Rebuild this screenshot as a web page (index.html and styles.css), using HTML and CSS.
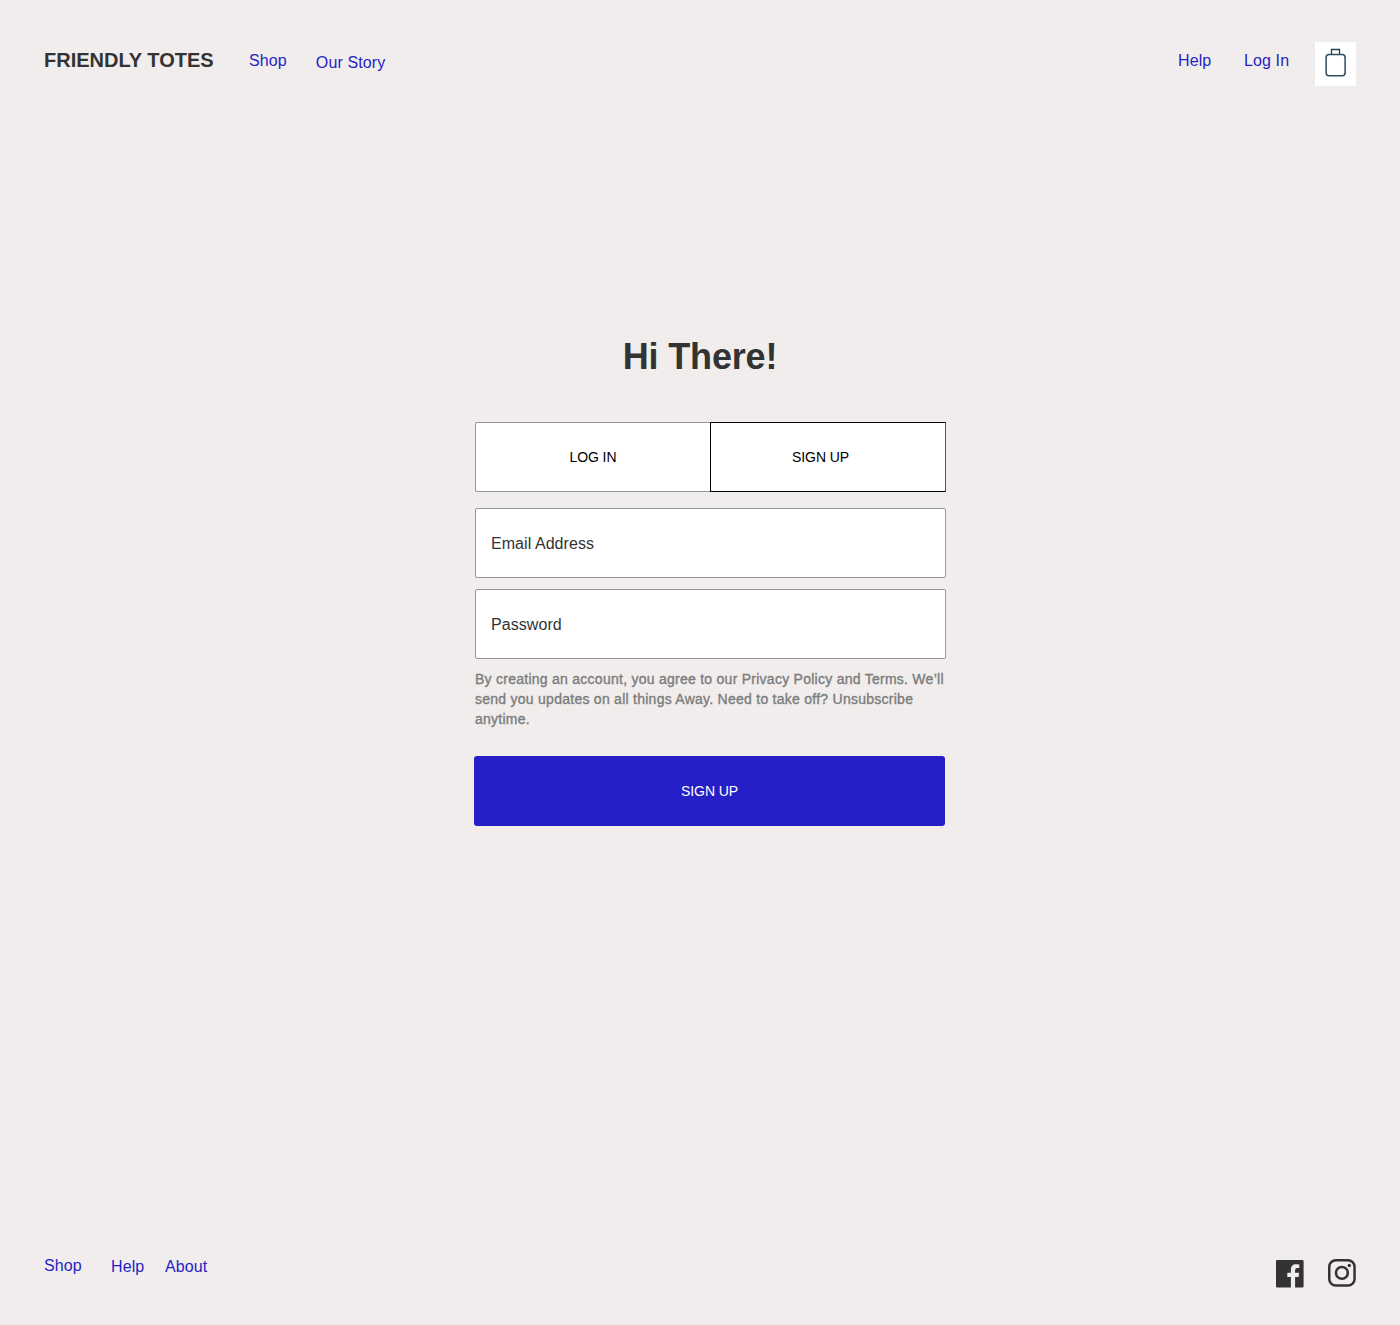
FILE: index.html
```html
<!DOCTYPE html>
<html lang="en">
<head>
  <meta charset="utf-8">
  <title>Friendly Totes</title>
  <link rel="stylesheet" href="styles.css">
</head>
<body>
  <div class="page">
    <header class="header">
      <a class="brand" href="#">FRIENDLY TOTES</a>
      <nav class="nav-main">
        <a class="link" href="#">Shop</a>
        <a class="link link-story" href="#">Our Story</a>
      </nav>
      <nav class="nav-account">
        <a class="link link-help" href="#">Help</a>
        <a class="link link-login" href="#">Log In</a>
        <a class="bag" href="#" aria-label="Bag">
          <svg width="41" height="44" viewBox="0 0 41 44" fill="none">
            <path d="M16.5 12.5v-5h8v5" stroke="#1d3e55" stroke-width="1.3"/>
            <rect x="11.1" y="12.6" width="19" height="21.2" rx="3" stroke="#2c4c61" stroke-width="1.5"/>
          </svg>
        </a>
      </nav>
    </header>

    <main class="account">
      <h1 class="title">Hi There!</h1>
      <div class="tabs">
        <button class="tab" type="button">LOG IN</button>
        <button class="tab tab-active" type="button">SIGN UP</button>
      </div>
      <div class="field">Email Address</div>
      <div class="field">Password</div>
      <p class="terms">By creating an account, you agree to our Privacy Policy and Terms. We’ll<br>send you updates on all things Away. Need to take off? Unsubscribe<br>anytime.</p>
      <button class="submit" type="button">SIGN UP</button>
    </main>

    <footer class="footer">
      <nav class="nav-footer">
        <a class="link footer-shop" href="#">Shop</a>
        <a class="link footer-help" href="#">Help</a>
        <a class="link footer-about" href="#">About</a>
      </nav>
      <div class="social">
        <a class="facebook" href="#" aria-label="Facebook">
          <svg width="28" height="28" viewBox="0 0 28 28">
            <path fill="#333" d="M1.4 0H26.2Q27.6 0 27.6 1.4V26.2Q27.6 27.6 26.2 27.6H19.1V17H22.6L23.1 12.8H19.1V10.2Q19.1 8.1 21.1 8.1H23.3V4.4Q21.9 4.2 20.1 4.2C16.8 4.2 14.9 6.2 14.9 9.6V12.8H11.3V17H14.9V27.6H1.4Q0 27.6 0 26.2V1.4Q0 0 1.4 0Z"/>
          </svg>
        </a>
        <a class="instagram" href="#" aria-label="Instagram">
          <svg width="28" height="28" viewBox="0 0 28 28" fill="none" stroke="#333" stroke-width="2.5">
            <rect x="1.25" y="1.25" width="25.3" height="25.3" rx="6.6"/>
            <circle cx="13.9" cy="13.9" r="5.9"/>
            <circle cx="21.3" cy="6.5" r="1.7" fill="#333" stroke="none"/>
          </svg>
        </a>
      </div>
    </footer>
  </div>
</body>
</html>
```
FILE: styles.css
```css
* {
  box-sizing: border-box;
}

body {
  margin: 0;
  background: #f0edec;
  color: #333;
  font: 16px/20px "Liberation Sans", Arial, sans-serif;
}

a {
  color: inherit;
  text-decoration: none;
}

button {
  padding: 0;
  font: inherit;
}

svg {
  display: block;
}

.page {
  display: flex;
  flex-direction: column;
  min-height: 1325px;
}

.header {
  display: flex;
  align-items: flex-start;
  height: 128px;
  padding: 42px 44px 0;
}

.brand {
  width: 205px;
  padding-top: 6px;
  font-size: 20px;
  font-weight: 700;
  line-height: 24px;
  white-space: nowrap;
}

.link {
  color: #261ec6;
  letter-spacing: 0.12px;
  white-space: nowrap;
}

.nav-main {
  display: flex;
  gap: 29px;
  padding-top: 9px;
}

.link-story {
  padding-top: 2px;
}

.nav-account {
  display: flex;
  margin-left: auto;
}

.link-help {
  width: 66px;
  padding-top: 9px;
}

.link-login {
  width: 71px;
  padding-top: 9px;
}

.bag {
  width: 41px;
  height: 44px;
  background: #fff;
}

.account {
  display: flex;
  flex-direction: column;
  width: 471px;
  margin: 207px 0 0 475px;
}

.title {
  align-self: center;
  margin: 0 21px 43px 0;
  font-size: 36px;
  letter-spacing: -0.15px;
  line-height: 44px;
}

.tabs {
  display: grid;
  grid-template-columns: 235px 236px;
  height: 70px;
  margin-bottom: 16px;
}

.tab {
  border: 1px solid #979797;
  border-right: 0;
  border-radius: 2px 0 0 2px;
  background: #fff;
  color: #000;
  font-size: 14px;
  letter-spacing: -0.1px;
}

.tab-active {
  padding-right: 15px;
  border: 1px solid #000;
  border-right-color: #555;
  border-radius: 0;
}

.field {
  height: 70px;
  margin-bottom: 11px;
  padding: 25px 15px 0;
  border: 1px solid #979797;
  border-radius: 2px;
  background: #fff;
  letter-spacing: 0.06px;
}

.terms {
  margin: -1px 0 27px;
  color: #7c7c7c;
  font-size: 14px;
  letter-spacing: 0.26px;
  line-height: 20px;
  white-space: nowrap;
  -webkit-text-stroke: 0.35px #7c7c7c;
}

.submit {
  width: 471px;
  height: 70px;
  margin-left: -1px;
  border: 0;
  border-radius: 3px;
  background: #261ec6;
  color: #fff;
  font-size: 14px;
  letter-spacing: -0.1px;
}

.footer {
  display: flex;
  justify-content: space-between;
  align-items: flex-start;
  height: 69px;
  margin-top: auto;
  padding: 0 44px;
}

.nav-footer {
  display: flex;
}

.footer-shop {
  width: 67px;
}

.footer-help {
  width: 54px;
  padding-top: 1px;
}

.footer-about {
  padding-top: 1px;
}

.social {
  display: flex;
  gap: 24px;
  padding-top: 3px;
}

.facebook {
  padding-top: 1px;
}
```
